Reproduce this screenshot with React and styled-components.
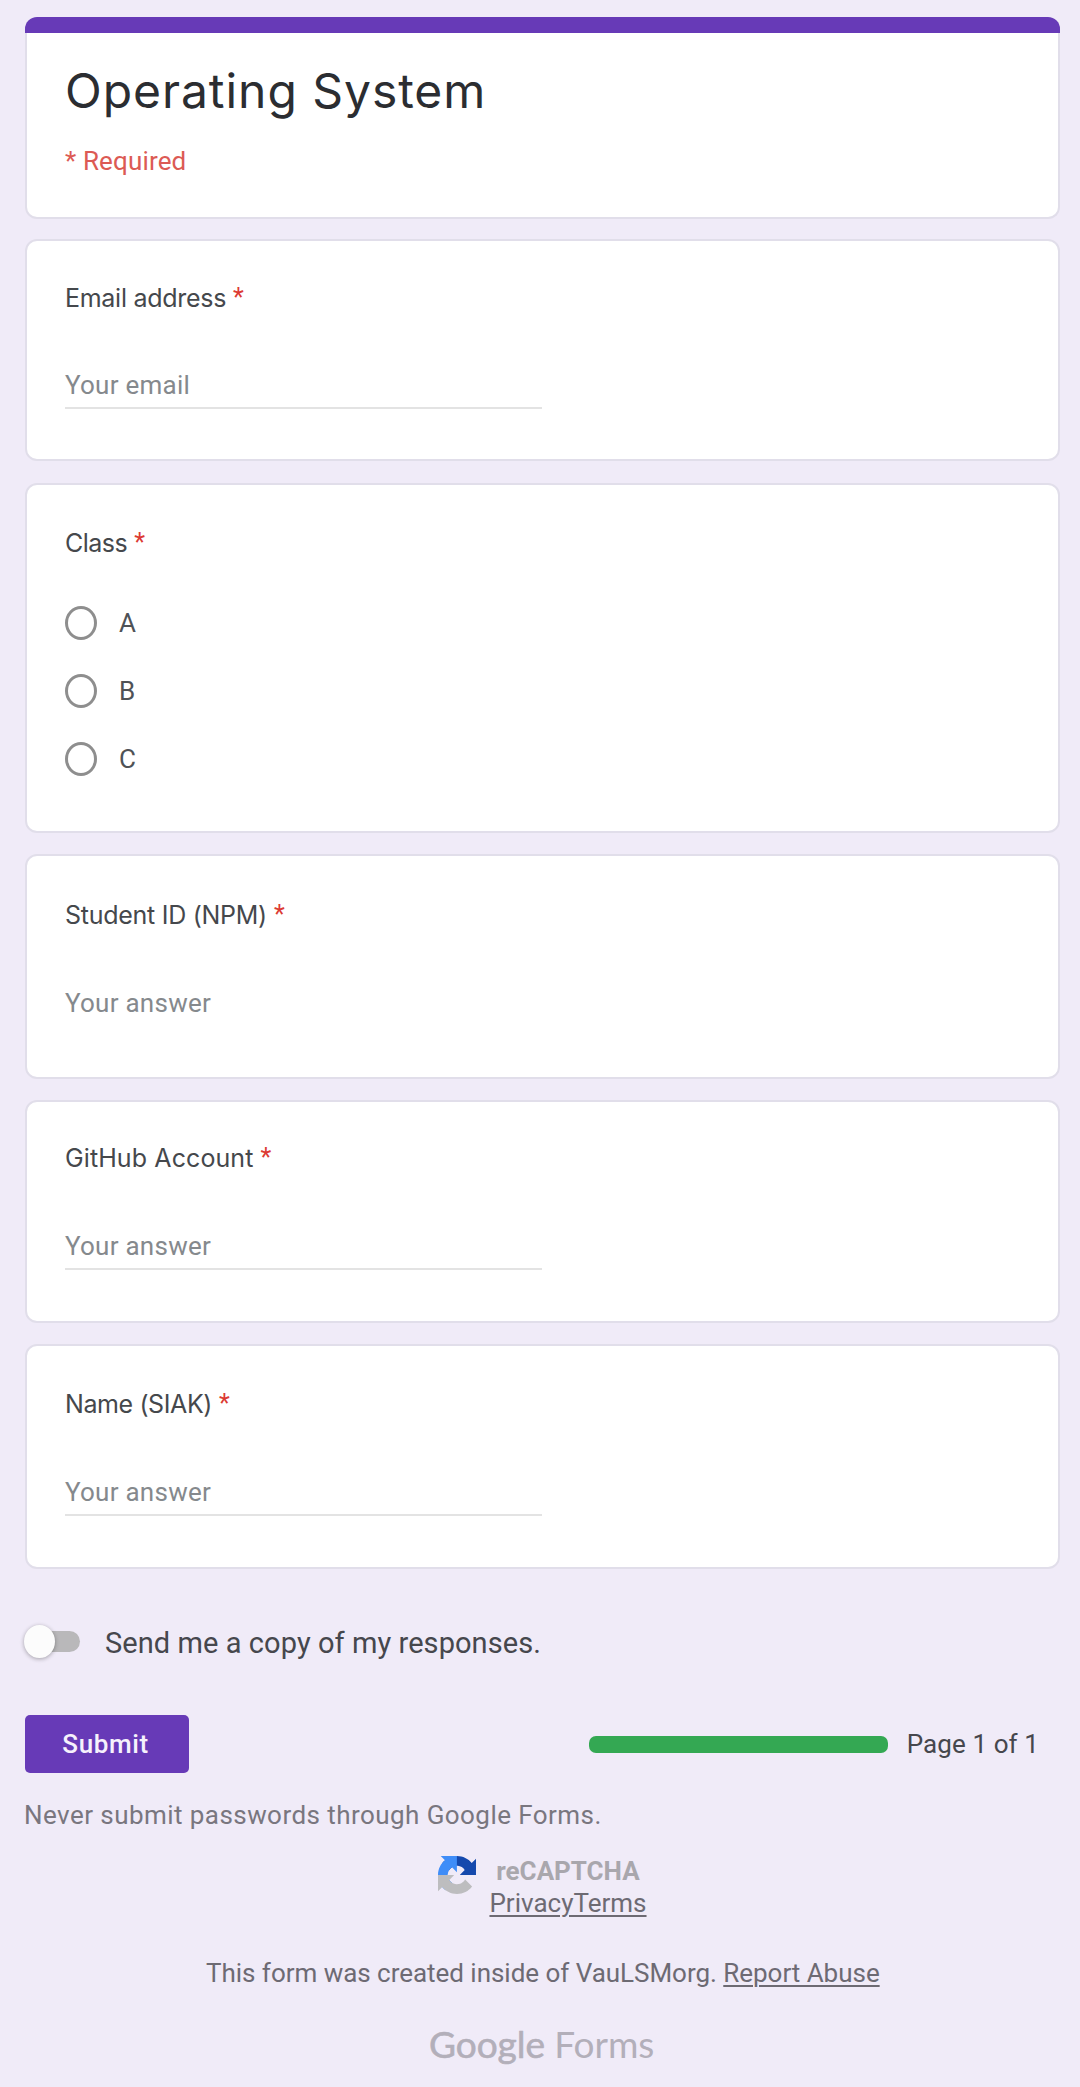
import React from 'react';
import styled, { createGlobalStyle } from 'styled-components';

const GlobalStyle = createGlobalStyle`
  * { box-sizing: border-box; }
  body {
    margin: 0;
    background: #f0ebf8;
    font-family: Roboto, "Liberation Sans", sans-serif;
    color: #202124;
  }
`;

const Page = styled.main`
  width: 1080px;
  height: 2087px;
  padding: 17px 20px 0 25px;
  display: flex;
  flex-direction: column;
  overflow: hidden;
  background: #f0ebf8;
`;

const Cards = styled.form`
  display: flex;
  flex-direction: column;
  gap: 21px;
`;

const Card = styled.section`
  height: ${(p) => p.$height}px;
  padding: ${(p) => p.$padTop}px 38px 0;
  margin-top: ${(p) => p.$shift || 0}px;
  background: #fff;
  border: 2px solid #e1deea;
  border-radius: 12px;
`;

const HeaderCard = styled.header`
  height: 202px;
  background: #fff;
  border: 2px solid #e1deea;
  border-top: 0;
  border-radius: 12px;
  margin-bottom: -1px;
`;

const Accent = styled.div`
  height: 16px;
  margin: 0 -2px;
  background: #673ab7;
  border-radius: 12px 12px 0 0;
`;

const HeaderBody = styled.div`
  padding: 28px 38px 0;
`;

const Title = styled.h1`
  margin: 0;
  font: 400 48px/60px Inter, Roboto, sans-serif;
  letter-spacing: 0.95px;
  color: #2b2d31;
`;

const Required = styled.p`
  margin: 24px 0 0;
  font-size: 26px;
  line-height: 32px;
  letter-spacing: 0.15px;
  color: #dc5a54;
`;

const Label = styled.h2`
  margin: 0;
  font: 400 25px/32px Inter, Roboto, sans-serif;
  letter-spacing: ${(p) => p.$tracking}px;
  color: #45484c;
  display: flex;
  gap: 7px;
`;

const Star = styled.span`
  color: #dc3a33;
  font-family: Roboto, sans-serif;
  letter-spacing: 0;
`;

const Answer = styled.div`
  width: 477px;
  margin-top: ${(p) => p.$gap}px;
  height: ${(p) => p.$height}px;
  border-bottom: 2px solid ${(p) => (p.$line ? '#e3e3e3' : 'transparent')};
  font-size: 26px;
  line-height: 32px;
  letter-spacing: 0.25px;
  color: #85898d;
`;

const Options = styled.div`
  display: flex;
  flex-direction: column;
  gap: 33px;
  margin-top: 46px;
`;

const Option = styled.label`
  display: flex;
  align-items: center;
  gap: 22px;
  height: 35px;
  font-size: 26px;
  color: #4f5256;
`;

const OptionText = styled.span`
  line-height: 33px;
  padding-top: 2px;
`;

const Radio = styled.span`
  width: 32px;
  height: 34px;
  border: 3px solid #8e8e8e;
  border-radius: 50%;
`;

const CopyRow = styled.div`
  display: flex;
  align-items: center;
  gap: 25px;
  height: 40px;
  margin-top: 53px;
  font-size: 29px;
  color: #46474d;
`;

const CopyText = styled.span`
  line-height: 38px;
  padding-top: 2px;
  letter-spacing: 0.07px;
`;

const Toggle = styled.span`
  display: flex;
  align-items: center;
  width: 55px;
  height: 34px;
`;

const Knob = styled.span`
  flex: none;
  width: 31px;
  height: 33px;
  margin: -2px 0 0 -1px;
  border-radius: 50%;
  background: #fcfcfc;
  box-shadow: 0 1px 4px rgba(0, 0, 0, 0.32);
  z-index: 1;
`;

const Track = styled.span`
  flex: 1;
  height: 21px;
  margin: -1px 0 0 -14px;
  border-radius: 0 11px 11px 0;
  background: #b9b8ba;
`;

const Actions = styled.div`
  display: flex;
  align-items: center;
  justify-content: space-between;
  height: 58px;
  margin-top: 53px;
  padding-right: 21px;
`;

const Submit = styled.button`
  width: 164px;
  height: 58px;
  padding: 0 3px 0 0;
  border: 0;
  border-radius: 5px;
  background: #673ab7;
  color: #f6f1fc;
  font: 500 26px/58px Roboto, sans-serif;
  letter-spacing: 0.6px;
`;

const Progress = styled.div`
  display: flex;
  align-items: center;
  gap: 19px;
  font-size: 26px;
  line-height: 32px;
  letter-spacing: 0.1px;
  color: #46474d;
`;

const Bar = styled.span`
  width: 299px;
  height: 17px;
  border-radius: 7px;
  background: #34a853;
`;

const Warning = styled.p`
  margin: 26px 0 0 -1px;
  font-size: 26px;
  line-height: 32px;
  letter-spacing: 0.44px;
  color: #79767f;
`;

const Captcha = styled.div`
  display: flex;
  align-items: flex-start;
  margin-top: 24px;
  padding-left: 413px;
`;

const CaptchaIcon = styled.svg`
  width: 38px;
  height: 38px;
  margin-top: 1px;
`;

const CaptchaText = styled.div`
  display: flex;
  flex-direction: column;
  align-items: center;
  width: 158px;
  margin-left: 13px;
  font-size: 26px;
  line-height: 32px;
`;

const CaptchaName = styled.strong`
  font-weight: 700;
  color: #a9a7ad;
`;

const Link = styled.a`
  color: #6d6a73;
  text-decoration: underline;
  text-decoration-thickness: 2px;
  text-underline-offset: 3px;
`;

const Origin = styled.p`
  margin: 38px 0 0 181px;
  font-size: 26px;
  line-height: 32px;
  letter-spacing: -0.03px;
  color: #6d6a73;
  white-space: nowrap;
`;

const Brand = styled.div`
  margin: 32px 0 0 404px;
  font: 400 37px/46px Lato, Roboto, sans-serif;
  letter-spacing: -0.05px;
  color: #b3afba;
`;

const BrandStrong = styled.span`
  -webkit-text-stroke: 0.6px #b3afba;
`;

const questions = [
  { label: 'Email address', hint: 'Your email', height: 222, padTop: 41, tracking: -0.28, gap: 55, box: 40, line: true },
  { label: 'Class', options: ['A', 'B', 'C'], height: 350, padTop: 42, tracking: -0.5, shift: 1 },
  { label: 'Student ID (NPM)', hint: 'Your answer', height: 225, padTop: 43, tracking: -0.27, gap: 56, box: 42, line: false },
  { label: 'GitHub Account', hint: 'Your answer', height: 223, padTop: 40, tracking: 0.1, gap: 56, box: 40, line: true },
  { label: 'Name (SIAK)', hint: 'Your answer', height: 225, padTop: 42, tracking: -0.4, gap: 56, box: 40, line: true },
];

function Question({ q }) {
  return (
    <Card $height={q.height} $padTop={q.padTop} $shift={q.shift}>
      <Label $tracking={q.tracking}>
        {q.label}
        <Star>*</Star>
      </Label>
      {q.options ? (
        <Options>
          {q.options.map((o) => (
            <Option key={o}>
              <Radio />
              <OptionText>{o}</OptionText>
            </Option>
          ))}
        </Options>
      ) : (
        <Answer $gap={q.gap} $height={q.box} $line={q.line}>{q.hint}</Answer>
      )}
    </Card>
  );
}

export default function App() {
  return (
    <Page>
      <GlobalStyle />
      <Cards>
        <HeaderCard>
          <Accent />
          <HeaderBody>
            <Title>Operating System</Title>
            <Required>* Required</Required>
          </HeaderBody>
        </HeaderCard>
        {questions.map((q) => (
          <Question key={q.label} q={q} />
        ))}
      </Cards>
      <CopyRow>
        <Toggle>
          <Knob />
          <Track />
        </Toggle>
        <CopyText>Send me a copy of my responses.</CopyText>
      </CopyRow>
      <Actions>
        <Submit type="button">Submit</Submit>
        <Progress>
          <Bar />
          Page 1 of 1
        </Progress>
      </Actions>
      <Warning>Never submit passwords through Google Forms.</Warning>
      <Captcha>
        <CaptchaIcon viewBox="0 0 64 64">
          <path fill="#1549ad" d="M64 31.955l-.033-1.37V4.687l-7.16 7.16C50.948 4.674 42.033.093 32.05.093c-10.4 0-19.622 4.96-25.458 12.64l11.736 11.86a15.55 15.55 0 0 1 4.754-5.334c2.05-1.6 4.952-2.906 8.968-2.906.485 0 .86.057 1.135.163 4.976.393 9.288 3.14 11.828 7.124l-8.307 8.307L64 31.953" />
          <path fill="#3f8df8" d="M31.862.094l-1.37.033H4.594l7.16 7.16C4.58 13.147 0 22.06 0 32.046c0 10.4 4.96 19.622 12.64 25.458L24.5 45.768a15.55 15.55 0 0 1-5.334-4.754c-1.6-2.05-2.906-4.952-2.906-8.968 0-.485.057-.86.163-1.135.393-4.976 3.14-9.288 7.124-11.828l8.307 8.307L31.86.095" />
          <path fill="#bdbdbf" d="M.001 32.045l.033 1.37v25.898l7.16-7.16c5.86 7.173 14.774 11.754 24.76 11.754 10.4 0 19.622-4.96 25.458-12.64l-11.736-11.86a15.55 15.55 0 0 1-4.754 5.334c-2.05 1.6-4.952 2.906-8.968 2.906-.485 0-.86-.057-1.135-.163-4.976-.393-9.288-3.14-11.828-7.124l8.307-8.307c-10.522.04-22.4.066-27.295-.005" />
        </CaptchaIcon>
        <CaptchaText>
          <CaptchaName>reCAPTCHA</CaptchaName>
          <Link>PrivacyTerms</Link>
        </CaptchaText>
      </Captcha>
      <Origin>
        This form was created inside of VauLSMorg. <Link>Report Abuse</Link>
      </Origin>
      <Brand>
        <BrandStrong>Google</BrandStrong> Forms
      </Brand>
    </Page>
  );
}
